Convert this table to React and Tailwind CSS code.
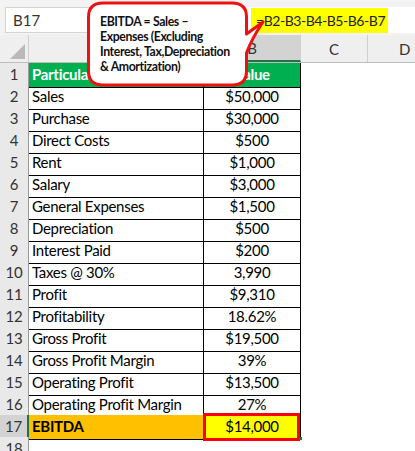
import React from "react";

const rows = [
  ["Sales", "$50,000"],
  ["Purchase", "$30,000"],
  ["Direct Costs", "$500"],
  ["Rent", "$1,000"],
  ["Salary", "$3,000"],
  ["General Expenses", "$1,500"],
  ["Depreciation", "$500"],
  ["Interest Paid", "$200"],
  ["Taxes @ 30%", "3,990"],
  ["Profit", "$9,310"],
  ["Profitability", "18.62%"],
  ["Gross Profit", "$19,500"],
  ["Gross Profit Margin", "39%"],
  ["Operating Profit", "$13,500"],
  ["Operating Profit Margin", "27%"],
];

function RowHead({ n, selected }) {
  return (
    <div
      className={
        "flex items-end justify-center pb-[1px] border-b border-[#d0d0d0] text-[15px] text-[#333] " +
        (selected
          ? "bg-[#d3d3d3] border-r-2 border-r-[#217346]"
          : "bg-[#e9e9e9] border-r border-r-[#9a9a9a]")
      }
    >
      {n}
    </div>
  );
}

export default function App() {
  return (
    <div className="relative w-[415px] h-[451px] overflow-hidden bg-white font-[Lato,sans-serif] text-black">
      {/* formula bar */}
      <div className="h-[35px] bg-[#f3f3f3] flex items-start pt-[7px]">
        <div className="ml-[5px] w-[150px] h-[26px] bg-white border border-[#d4d4d4] flex items-center pl-[7px] text-[15px] text-[#333]">
          B17
        </div>
        <div className="ml-[89px] flex-1 h-[26px] bg-white border-l border-[#d4d4d4] flex items-center pl-[6px]">
          <div className="h-[25px] w-[137px] bg-[#ffff00] flex items-center pl-[5px] text-[14px] tracking-[-0.45px] whitespace-nowrap text-[#222]">
            =B2-B3-B4-B5-B6-B7
          </div>
        </div>
      </div>

      {/* column headers */}
      <div className="grid grid-cols-[29px_175px_97px_67px_1fr] h-[28px] bg-[#efefef] border-b border-[#bdbdbd] text-[15px] text-[#333]">
        <div className="relative border-r border-[#cfcfcf]">
          <svg className="absolute left-[10px] top-[9px]" width="16" height="15" viewBox="0 0 16 15">
            <polygon points="15,0 15,15 0,15" fill="#b9b9b9" />
          </svg>
        </div>
        <div className="border-r border-[#cfcfcf]" />
        <div className="flex items-end justify-center pb-[1px] bg-[#d3d3d3] border-b-2 border-[#217346] border-r border-r-[#cfcfcf]">
          B
        </div>
        <div className="flex items-end justify-center pb-[2px] border-r border-[#cfcfcf]">C</div>
        <div className="flex items-end justify-start pl-[31px] pb-[2px]">D</div>
      </div>

      {/* body */}
      <div className="flex flex-col text-[15px] tracking-[-0.3px]">
        <div className="grid grid-cols-[29px_175px_97px_1fr] h-[22px]">
          <RowHead n={1} />
          <div className="bg-[#00b050] border-b border-r border-black flex items-end pb-[1px] pl-[3px] font-bold text-white">
            Particulars
          </div>
          <div className="bg-[#00b050] border-b border-r border-black flex items-end justify-center pb-[1px] font-bold text-white">
            Value
          </div>
          <div />
        </div>

        {rows.map(([a, b], i) => (
          <div key={a} className="grid grid-cols-[29px_175px_97px_1fr] h-[22px]">
            <RowHead n={i + 2} />
            <div className="border-b border-r border-black flex items-end pb-[1px] pl-[3px]">{a}</div>
            <div className="border-b border-r border-black flex items-end justify-center pb-[1px]">{b}</div>
            <div />
          </div>
        ))}

        <div className="grid grid-cols-[29px_175px_97px_1fr] h-[22px]">
          <RowHead n={17} selected />
          <div className="bg-[#ffc000] border-b border-r border-black flex items-end pb-[1px] pl-[3px] font-bold">
            EBITDA
          </div>
          <div className="relative bg-[#ffff00] border-b border-r border-black flex items-end justify-center pb-[1px]">
            $14,000
            <div className="absolute left-[-1px] top-[-2px] right-[0px] bottom-[-2px] border-[3px] border-[#ff0000]" />
            <div className="absolute right-[-2px] bottom-[-1px] w-[3px] h-[3px] bg-[#217346]" />
          </div>
          <div />
        </div>

        <div className="grid grid-cols-[29px_175px_97px_1fr] h-[22px]">
          <RowHead n={18} />
          <div />
          <div />
          <div />
        </div>
      </div>

      {/* callout bubble */}
      <svg
        className="absolute left-0 top-0 pointer-events-none"
        width="415"
        height="100"
        viewBox="0 0 415 100"
      >
        <path
          d="M103 3 H232 Q246.5 3 246.5 17 V34 L263 22 Q252 38 246.5 53 V71 Q246.5 85 232 85 H103 Q88.5 85 88.5 71 V17 Q88.5 3 103 3 Z"
          fill="#ffffff"
          stroke="#ee1111"
          strokeWidth="3"
          strokeLinejoin="round"
        />
      </svg>
      <div className="absolute left-[100px] top-[14px] text-[12.3px] leading-[15px] font-bold tracking-[-0.4px] text-[#111]">
        <div>EBITDA = Sales –</div>
        <div>Expenses (Excluding</div>
        <div>Interest, Tax,Depreciation</div>
        <div>&amp; Amortization)</div>
      </div>
    </div>
  );
}
